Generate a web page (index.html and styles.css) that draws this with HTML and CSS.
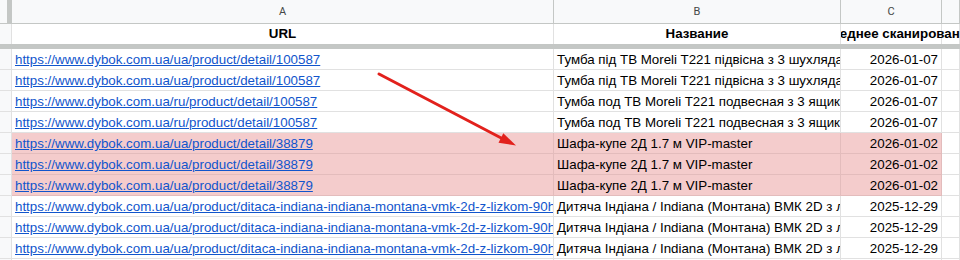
FILE: index.html
```html
<!DOCTYPE html>
<html lang="uk">
<head>
<meta charset="utf-8">
<title>Sheet</title>
<link rel="stylesheet" href="styles.css">
</head>
<body>
<div class="sheet">
  <div class="row colhdr">
    <div class="cell corner"></div>
    <div class="cell">A</div>
    <div class="cell">B</div>
    <div class="cell">C</div>
    <div class="cell"></div>
  </div>
  <div class="row head">
    <div class="cell rh"></div>
    <div class="cell">URL</div>
    <div class="cell">Название</div>
    <div class="cell spill"><span>Последнее сканирование</span></div>
    <div class="cell"></div>
  </div>
  <div class="freeze"></div>

  <div class="row">
    <div class="cell rh"></div>
    <div class="cell"><span class="link">https://www.dybok.com.ua/ua/product/detail/100587</span></div>
    <div class="cell">Тумба під ТВ Moreli T221 підвісна з 3 шухлядами</div>
    <div class="cell date">2026-01-07</div>
    <div class="cell"></div>
  </div>
  <div class="row">
    <div class="cell rh"></div>
    <div class="cell"><span class="link">https://www.dybok.com.ua/ua/product/detail/100587</span></div>
    <div class="cell">Тумба під ТВ Moreli T221 підвісна з 3 шухлядами</div>
    <div class="cell date">2026-01-07</div>
    <div class="cell"></div>
  </div>
  <div class="row">
    <div class="cell rh"></div>
    <div class="cell"><span class="link">https://www.dybok.com.ua/ru/product/detail/100587</span></div>
    <div class="cell">Тумба под ТВ Moreli T221 подвесная з 3 ящиками</div>
    <div class="cell date">2026-01-07</div>
    <div class="cell"></div>
  </div>
  <div class="row">
    <div class="cell rh"></div>
    <div class="cell"><span class="link">https://www.dybok.com.ua/ru/product/detail/100587</span></div>
    <div class="cell">Тумба под ТВ Moreli T221 подвесная з 3 ящиками</div>
    <div class="cell date">2026-01-07</div>
    <div class="cell"></div>
  </div>
  <div class="row hl">
    <div class="cell rh"></div>
    <div class="cell fill"><span class="link">https://www.dybok.com.ua/ua/product/detail/38879</span></div>
    <div class="cell fill">Шафа-купе 2Д 1.7 м VIP-master</div>
    <div class="cell fill date">2026-01-02</div>
    <div class="cell"></div>
  </div>
  <div class="row hl">
    <div class="cell rh"></div>
    <div class="cell fill"><span class="link">https://www.dybok.com.ua/ua/product/detail/38879</span></div>
    <div class="cell fill">Шафа-купе 2Д 1.7 м VIP-master</div>
    <div class="cell fill date">2026-01-02</div>
    <div class="cell"></div>
  </div>
  <div class="row hl">
    <div class="cell rh"></div>
    <div class="cell fill"><span class="link">https://www.dybok.com.ua/ua/product/detail/38879</span></div>
    <div class="cell fill">Шафа-купе 2Д 1.7 м VIP-master</div>
    <div class="cell fill date">2026-01-02</div>
    <div class="cell"></div>
  </div>
  <div class="row">
    <div class="cell rh"></div>
    <div class="cell"><span class="link">https://www.dybok.com.ua/ua/product/ditaca-indiana-indiana-montana-vmk-2d-z-lizkom-90h200</span></div>
    <div class="cell">Дитяча Індіана / Indiana (Монтана) ВМК 2D з ліжком</div>
    <div class="cell date">2025-12-29</div>
    <div class="cell"></div>
  </div>
  <div class="row">
    <div class="cell rh"></div>
    <div class="cell"><span class="link">https://www.dybok.com.ua/ua/product/ditaca-indiana-indiana-montana-vmk-2d-z-lizkom-90h200</span></div>
    <div class="cell">Дитяча Індіана / Indiana (Монтана) ВМК 2D з ліжком</div>
    <div class="cell date">2025-12-29</div>
    <div class="cell"></div>
  </div>
  <div class="row">
    <div class="cell rh"></div>
    <div class="cell"><span class="link">https://www.dybok.com.ua/ua/product/ditaca-indiana-indiana-montana-vmk-2d-z-lizkom-90h200</span></div>
    <div class="cell">Дитяча Індіана / Indiana (Монтана) ВМК 2D з ліжком</div>
    <div class="cell date">2025-12-29</div>
    <div class="cell"></div>
  </div>
  <div class="row">
    <div class="cell rh"></div>
    <div class="cell"></div>
    <div class="cell"></div>
    <div class="cell"></div>
    <div class="cell"></div>
  </div>

  <svg class="arrow" width="960" height="260" viewBox="0 0 960 260" aria-hidden="true">
    <line x1="379" y1="74" x2="505" y2="140" stroke="#e2211c" stroke-width="3" stroke-linecap="round"/>
    <polygon points="516,145.5 498.5,142.8 503.3,133.2" fill="#e2211c"/>
  </svg>
</div>
</body>
</html>
```

FILE: styles.css
```css
body {
  margin: 0;
  background: #ffffff;
  font-family: "Liberation Sans", Arial, sans-serif;
  font-size: 13.333px;
  color: #000000;
}

.sheet {
  position: relative;
  width: 960px;
  height: 260px;
  overflow: hidden;
}

.row {
  display: grid;
  grid-template-columns: 12px 542px 287px 101px 1fr;
  height: 21px;
}

.cell {
  box-sizing: border-box;
  border-right: 1px solid #e1e1e1;
  border-bottom: 1px solid #e1e1e1;
  padding: 1px 3px 0;
  line-height: 19px;
  white-space: nowrap;
  overflow: hidden;
}

.rh {
  background: #f8f9fa;
  padding: 0;
}

.colhdr {
  height: 24px;
  background: #f8f9fa;
}

.colhdr .cell {
  border-color: #c4c7c5;
  text-align: center;
  font-family: Roboto, "Liberation Sans", sans-serif;
  font-size: 11px;
  color: #444746;
  line-height: 23px;
  padding: 0;
}

.colhdr .corner {
  border-right: 5px solid #c4c7c5;
}

.head {
  height: 20px;
}

.head .cell {
  border-bottom: none;
  font-weight: bold;
  text-align: center;
  padding: 0 3px;
  line-height: 20px;
}

.head .rh {
  background: #f8f9fa;
}

.head .spill {
  display: flex;
  justify-content: center;
  overflow: visible;
  clip-path: inset(0 -200px 0 0);
}

.freeze {
  height: 5px;
  background: #c4c7c5;
}

.link {
  color: #1155cc;
  text-decoration: underline;
}

.date {
  text-align: right;
}

.fill {
  background: #f4cccc;
  border-color: #e3bcbc;
}

.arrow {
  position: absolute;
  left: 0;
  top: 0;
  pointer-events: none;
}
```
